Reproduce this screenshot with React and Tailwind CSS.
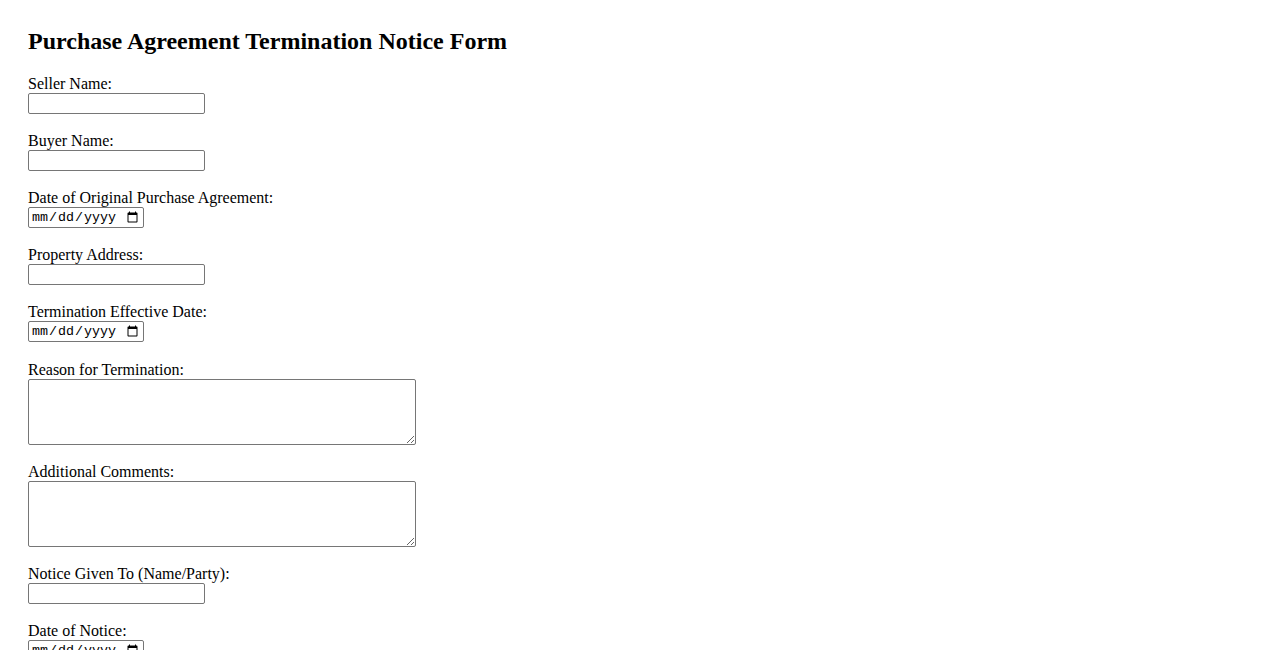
import React from 'react';

const fields = [
  { label: 'Seller Name:', type: 'text' },
  { label: 'Buyer Name:', type: 'text' },
  { label: 'Date of Original Purchase Agreement:', type: 'date' },
  { label: 'Property Address:', type: 'text' },
  { label: 'Termination Effective Date:', type: 'date', extra: true },
  { label: 'Reason for Termination:', type: 'textarea' },
  { label: 'Additional Comments:', type: 'textarea' },
  { label: 'Notice Given To (Name/Party):', type: 'text' },
  { label: 'Date of Notice:', type: 'date' },
];

function Field({ label, type, extra }) {
  let control;
  if (type === 'textarea') {
    control = (
      <textarea className="block h-[66px] w-[388px] rounded-[2px] border border-[#767676] bg-white px-[2px] py-[2px] font-['Liberation_Mono',monospace] text-[13.33px]" />
    );
  } else if (type === 'date') {
    control = (
      <input
        type="date"
        className="block h-[21px] w-[116px] rounded-[2px] border border-[#767676] bg-white px-[2px] font-['Liberation_Mono',monospace] text-[13.33px] text-black"
      />
    );
  } else {
    control = (
      <input
        type="text"
        className="block h-[21px] w-[177px] rounded-[2px] border border-[#767676] bg-white px-[2px] font-['Liberation_Sans',sans-serif] text-[13.33px]"
      />
    );
  }

  return (
    <div className={extra ? 'mb-[18px]' : 'mb-[17px]'}>
      <label className="block h-[19px] pt-[1px] leading-[18px]">{label}</label>
      {control}
    </div>
  );
}

export default function App() {
  return (
    <div className="min-h-screen bg-white px-[28px] pt-[27px] font-['Liberation_Serif',serif] text-[16px] text-black">
      <h2 className="mb-[19px] text-[24px] font-bold leading-[28px]">
        Purchase Agreement Termination Notice Form
      </h2>
      <form>
        {fields.map((f) => (
          <Field key={f.label} {...f} />
        ))}
      </form>
    </div>
  );
}
